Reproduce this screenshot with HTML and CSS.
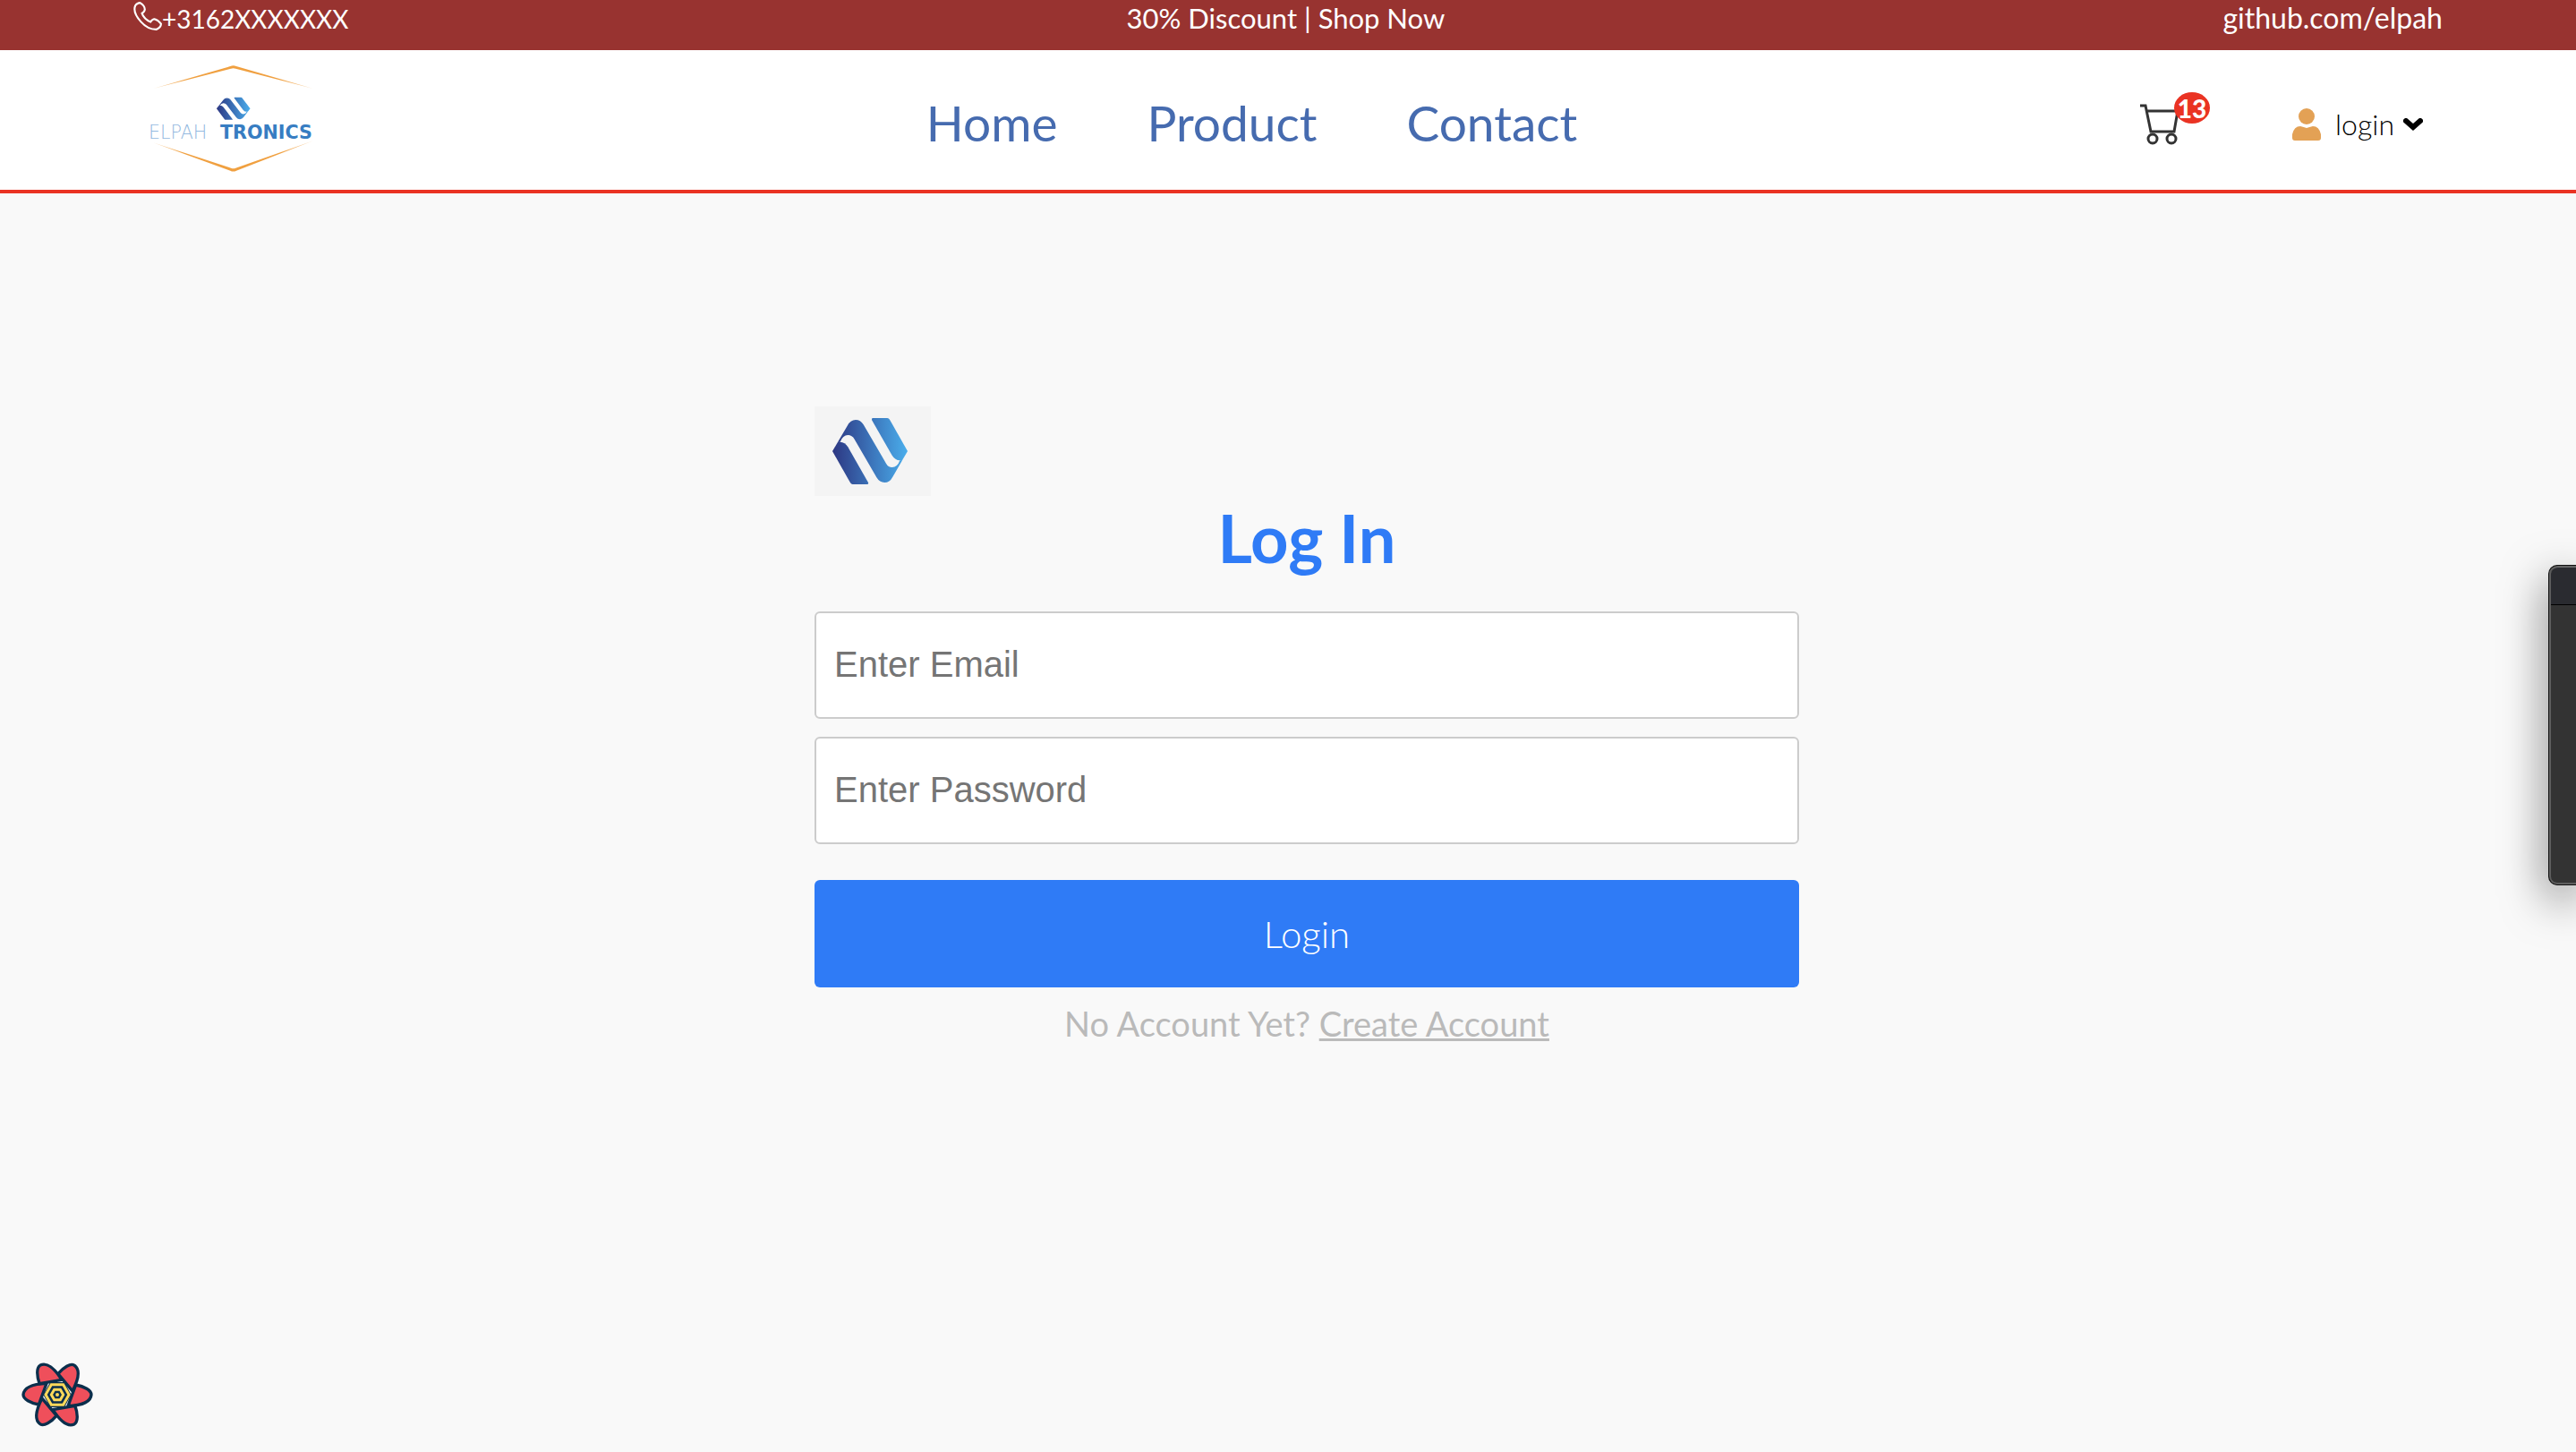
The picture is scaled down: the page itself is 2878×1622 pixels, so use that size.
FILE: index.html
```html
<!DOCTYPE html>
<html lang="en">
<head>
<meta charset="utf-8">
<title>Elpah Tronics – Log In</title>
<link rel="stylesheet" href="styles.css">
</head>
<body>
<svg class="defs" width="0" height="0" aria-hidden="true">
  <defs>
    <linearGradient id="brand" gradientUnits="userSpaceOnUse" x1="120" y1="222" x2="372" y2="222">
      <stop offset="0" stop-color="#2d3782"/>
      <stop offset="0.5" stop-color="#3b72b8"/>
      <stop offset="1" stop-color="#4aaeec"/>
    </linearGradient>
    <linearGradient id="roof" gradientUnits="userSpaceOnUse" x1="125" y1="0" x2="662" y2="0">
      <stop offset="0" stop-color="#f0a040" stop-opacity="0.4"/>
      <stop offset="0.2" stop-color="#f0a040"/>
      <stop offset="0.8" stop-color="#f0a040"/>
      <stop offset="1" stop-color="#f0a040" stop-opacity="0.4"/>
    </linearGradient>
    <g id="mark" fill="url(#brand)">
      <path d="M120 222L170 137Q180 117 198 117Q214 117 224 133L300 263Q307 276 320 276Q338 276 346 253L354 252L372 222L322 308Q312 327 295 327Q278 327 268 310L194 182Q186 168 172 168Q155 168 146 191L138 192Z"/>
      <path d="M120 222L138 192L146 191Q162 192 172 208L240 327Q242 333 236 333L188 333Q183 333 180 328Z"/>
      <path d="M372 222L354 252L346 253Q330 252 320 236L253 119Q250 111 256 111L304 111Q309 111 312 116Z"/>
    </g>
    <path id="petal" d="M-114 0C-112 -25 -80 -36 -36 -38L-62 33C-90 28 -114 15 -114 0Z"/>
  </defs>
</svg>

<div class="topbar">
  <a class="topbar-link topbar-phone" href="#phone">
    <svg class="phone-icon" viewBox="0 0 30 30" aria-hidden="true"><path d="M2 4Q4 1 7 1Q12 4 12 8Q12 10 9 12Q11 18 18 21Q20 18 22 18Q26 19 29 23Q29 27 24 29Q15 29 8 21Q-1 11 2 4Z"/></svg>
    <span>+3162XXXXXXX</span>
  </a>
  <span class="topbar-offer">30% Discount | Shop Now</span>
  <a class="topbar-link" href="#github">github.com/elpah</a>
</div>

<header class="header">
  <a class="logo" href="#home" aria-label="Elpah Tronics">
    <svg class="logo-image" viewBox="110 216 570 360">
      <g fill="url(#roof)">
        <path d="M125 297L384 222Q394 217 404 222L662 297L402 230Q394 228 386 230Z"/>
        <path d="M125 478L386 563Q394 566 402 563L662 472L404 572Q394 577 384 572Z"/>
      </g>
      <use href="#mark" transform="translate(284 289) scale(0.448 0.338)"/>
      <text class="logo-thin" x="110" y="465">ELPAH</text>
      <text class="logo-bold" x="350" y="465">TRONICS</text>
    </svg>
  </a>
  <nav class="nav">
    <a href="#home">Home</a>
    <a href="#product">Product</a>
    <a href="#contact">Contact</a>
  </nav>
  <div class="account">
    <a class="cart" href="#cart" aria-label="Cart">
      <svg class="cart-icon" viewBox="0 0 46 46" aria-hidden="true"><path d="M0 2H6L12 31H38L42 8H8"/><circle cx="14" cy="39" r="5"/><circle cx="35" cy="39" r="5"/></svg>
      <span class="badge">13</span>
    </a>
    <button class="login-menu" type="button">
      <svg class="user-icon" viewBox="0 0 32 36" aria-hidden="true"><circle cx="16" cy="9" r="9"/><path d="M0 33V29Q2 20 9 20Q13 21 16 22Q19 21 23 20Q30 20 32 29V33Q32 36 29 36H3Q0 36 0 33Z"/></svg>
      <span>login</span>
      <svg class="chevron" viewBox="0 0 22 14" aria-hidden="true"><path d="M3 3L11 10L19 3"/></svg>
    </button>
  </div>
</header>

<main class="main">
  <form class="login-form">
    <svg class="form-logo" viewBox="60 72 390 300" aria-hidden="true"><use href="#mark"/></svg>
    <h1>Log In</h1>
    <input class="field" type="email" placeholder="Enter Email" aria-label="Email">
    <input class="field" type="password" placeholder="Enter Password" aria-label="Password">
    <button class="submit" type="submit">Login</button>
    <p class="signup">No Account Yet? <a href="#signup">Create Account</a></p>
  </form>
</main>

<button class="query-button" type="button" aria-label="Open query tools">
  <svg class="flower" viewBox="-123 -111 246 222" aria-hidden="true">
    <g class="petals">
      <use href="#petal"/>
      <use href="#petal" transform="rotate(60)"/>
      <use href="#petal" transform="rotate(120)"/>
      <use href="#petal" transform="rotate(180)"/>
      <use href="#petal" transform="rotate(240)"/>
      <use href="#petal" transform="rotate(300)"/>
    </g>
    <path class="core" d="M-47 0L-24 -42H24L47 0L24 42H-24Z"/>
    <path class="ring" d="M-39 0L-20 -34H20L39 0L20 34H-20Z"/>
    <path class="ring" d="M-20 0L-10 -17H10L20 0L10 17H-10Z"/>
    <circle class="dot" r="6"/>
  </svg>
</button>

<aside class="side-window" aria-hidden="true"><div class="side-window-bar"></div></aside>
</body>
</html>
```
FILE: styles.css
```css
* {
  box-sizing: border-box;
}

body {
  margin: 0;
  min-height: 100vh;
  background: #f9f9f9;
  font-family: Lato, "Open Sans", sans-serif;
  position: relative;
  overflow-x: hidden;
}

a {
  color: inherit;
  text-decoration: none;
}

button {
  border: 0;
  padding: 0;
  background: none;
  font-family: inherit;
  cursor: pointer;
}

svg {
  display: block;
}

.defs {
  position: absolute;
}

.topbar {
  display: flex;
  justify-content: space-between;
  height: 56px;
  padding: 0 149px;
  background: #983330;
  color: #fff;
  font-size: 32px;
  line-height: 40px;
}

.topbar-link {
  display: flex;
}

.topbar-phone {
  font-size: 28px;
  line-height: 42px;
}

.topbar-offer {
  font-size: 31px;
}

.phone-icon {
  width: 32px;
  height: 32px;
  margin-top: 2px;
  fill: none;
  stroke: #fff;
  stroke-width: 2;
}

.header {
  display: flex;
  align-items: center;
  justify-content: space-between;
  height: 160px;
  padding: 10px 171px 0 166px;
  background: #fff;
  border-bottom: 4px solid #ea3323;
}

.logo {
  align-self: flex-start;
  margin: 6px 50px 0 0;
}

.logo-image {
  width: 190px;
  height: 120px;
}

.logo-thin,
.logo-bold {
  font-family: "DejaVu Sans", sans-serif;
  font-size: 62px;
}

.logo-thin {
  font-weight: 200;
  fill: #93b9e0;
}

.logo-bold {
  font-weight: 700;
  fill: #377dc2;
}

.nav {
  display: flex;
  gap: 100px;
  padding-bottom: 4px;
  color: #466baf;
  font-size: 55px;
  line-height: 68px;
}

.account {
  display: flex;
  align-items: center;
  gap: 92px;
}

.cart {
  position: relative;
  width: 78px;
}

.cart-icon {
  width: 46px;
  height: 46px;
  fill: none;
  stroke: #333;
  stroke-width: 3;
}

.badge {
  position: absolute;
  top: -13px;
  right: 0;
  width: 40px;
  height: 35px;
  border-radius: 50%;
  background: #ea3323;
  color: #fff;
  font-size: 28px;
  font-weight: 900;
  line-height: 37px;
  text-align: center;
}

.login-menu {
  display: flex;
  align-items: center;
  color: #000;
  font-size: 32px;
  font-weight: 300;
  line-height: 40px;
}

.user-icon {
  width: 32px;
  height: 36px;
  margin-right: 16px;
  fill: #e3a155;
}

.chevron {
  width: 22px;
  height: 14px;
  margin-left: 10px;
  fill: none;
  stroke: #000;
  stroke-width: 6;
  stroke-linecap: round;
}

.main {
  display: flex;
  justify-content: center;
  padding: 238px 0 40px 42px;
}

.login-form {
  display: flex;
  flex-direction: column;
  width: 1100px;
  max-width: 100%;
}

.form-logo {
  width: 130px;
  height: 100px;
  background: #f4f4f4;
}

h1 {
  margin: 0 0 35px;
  color: #2f7bf6;
  font-size: 74px;
  font-weight: 700;
  line-height: 94px;
  text-align: center;
}

.field {
  height: 120px;
  margin-bottom: 20px;
  padding: 0 20px 2px;
  border: 2px solid #ccc;
  border-radius: 6px;
  background: #fff;
  font-family: "Liberation Sans", Arial, sans-serif;
  font-size: 40px;
}

.field::placeholder {
  color: #757575;
}

.submit {
  height: 120px;
  margin-top: 20px;
  border-radius: 6px;
  background: #2f7bf6;
  color: #fff;
  font-size: 42px;
  font-weight: 300;
}

.signup {
  margin: 15px 0 0;
  color: #bababa;
  font-size: 38px;
  line-height: 50px;
  text-align: center;
}

.signup a {
  text-decoration: underline;
}

.query-button {
  position: absolute;
  left: 23px;
  bottom: 27px;
}

.flower {
  width: 82px;
  height: 74px;
}

.petals {
  fill: #ef4f5b;
  stroke: #0b2f4c;
  stroke-width: 10;
  stroke-linejoin: round;
}

.core {
  fill: #0b2f4c;
}

.ring {
  fill: none;
  stroke: #fdd95a;
  stroke-width: 9;
}

.dot {
  fill: #fdd95a;
}

.side-window {
  position: absolute;
  top: 631px;
  right: 0;
  width: 31px;
  height: 358px;
  border: 1px solid #111;
  border-right: 0;
  border-radius: 10px 0 0 10px;
  background: #333;
  box-shadow: inset 2px 0 #5e5e5e, inset 0 2px #5e5e5e, inset 0 -2px #5e5e5e, 0 16px 50px rgba(0, 0, 0, 0.55);
}

.side-window-bar {
  height: 43px;
  margin: 1px 0 0 2px;
  border-bottom: 1px solid #000;
  border-top: 1px solid #6e6e6e;
  border-radius: 8px 0 0 0;
  background: #2a2b30;
}
```
